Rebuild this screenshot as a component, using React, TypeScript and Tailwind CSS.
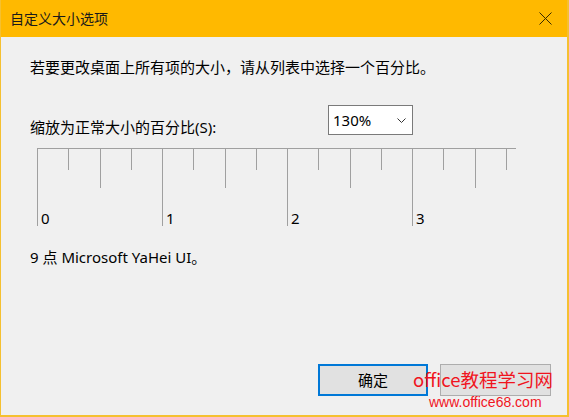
import React from "react";

const FONT = { fontFamily: '"Noto Sans", "Noto Sans CJK SC", sans-serif' };

function Ruler() {
  const ticks: { x: number; len: number }[] = [];
  for (let i = 0; i <= 15; i++) {
    const x = Math.round(7 + i * 31.25) + 0.5;
    let len = 22;
    if (i % 4 === 0) len = 78;
    else if (i % 2 === 0) len = 40;
    ticks.push({ x, len });
  }
  return (
    <svg width="500" height="90" className="block" shapeRendering="crispEdges">
      <line x1="7" y1="6.5" x2="486" y2="6.5" stroke="#a0a0a0" strokeWidth="1" />
      {ticks.map((t, i) => (
        <line key={i} x1={t.x} y1="6" x2={t.x} y2={6 + t.len} stroke="#a0a0a0" strokeWidth="1" />
      ))}
      {[0, 1, 2, 3].map((n) => (
        <text key={n} x={11 + n * 125} y="82" fontSize="15" fill="#000" style={FONT}>
          {n}
        </text>
      ))}
    </svg>
  );
}

export default function App() {
  return (
    <div
      className="relative w-[569px] h-[417px] flex flex-col bg-[#f0f0f0] border-l border-r-2 border-b-2 border-[#f5c030] overflow-hidden text-black"
      style={FONT}
    >
      <div className="h-[37px] shrink-0 bg-[#ffb900] flex items-center justify-between pl-[9px] pr-[15px]">
        <span className="text-[14px] leading-none text-[#1a1a1a]">自定义大小选项</span>
        <svg width="13" height="13" viewBox="0 0 13 13">
          <path d="M0.5 0.5 L12.5 12.5 M12.5 0.5 L0.5 12.5" stroke="#3a2a00" strokeWidth="1" fill="none" />
        </svg>
      </div>
      <div className="flex-1 flex flex-col pl-[29px]">
        <p className="mt-[20px] text-[15px] leading-[20px]">
          若要更改桌面上所有项的大小，请从列表中选择一个百分比。
        </p>
        <div className="mt-[28px] flex items-start">
          <span className="mt-[12px] text-[15px] leading-[20px]">缩放为正常大小的百分比(S):</span>
          <div className="ml-auto mr-[154px] w-[85px] h-[30px] bg-white border border-[#7a7a7a] flex items-center justify-between pl-[4px] pr-[6px]">
            <span className="text-[15px] leading-none">130%</span>
            <svg width="9" height="5" viewBox="0 0 9 5">
              <path d="M0.5 0.5 L4.5 4.5 L8.5 0.5" stroke="#333" strokeWidth="1" fill="none" />
            </svg>
          </div>
        </div>
        <div className="mt-[5px]">
          <Ruler />
        </div>
        <p className="mt-[15px] text-[15px] leading-[20px]">9 点 Microsoft YaHei UI。</p>
        <div className="mt-auto mb-[19px] flex justify-end gap-[12px] pr-[16px]">
          <button className="w-[110px] h-[32px] bg-[#e1e1e1] border-2 border-[#0078d7] text-[15px] leading-none">
            确定
          </button>
          <button className="w-[111px] h-[32px] bg-[#e1e1e1] border border-[#adadad]" aria-label="取消" />
        </div>
      </div>
      <div className="absolute left-[412px] top-[369px] flex flex-col items-start pointer-events-none">
        <span className="text-[18.5px] leading-[20px] text-[#f0141e]" style={{ fontFamily: '"Noto Sans CJK SC", sans-serif' }}>
          office教程学习网
        </span>
        <span className="ml-[16px] mt-[6px] text-[14px] leading-[14px] text-[#f0141e]" style={{ fontFamily: '"Liberation Sans", sans-serif' }}>
          www.office68.com
        </span>
      </div>
    </div>
  );
}
